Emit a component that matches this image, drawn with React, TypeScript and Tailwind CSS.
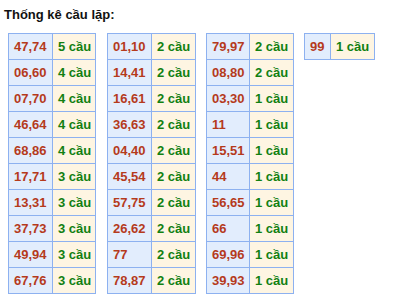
type Item = [string, number];

const tables: { items: Item[]; w1: string; w2: string; ml: string }[] = [
  {
    ml: 'ml-[8px]',
    w1: 'w-[44px]',
    w2: 'w-[43px]',
    items: [
      ['47,74', 5],
      ['06,60', 4],
      ['07,70', 4],
      ['46,64', 4],
      ['68,86', 4],
      ['17,71', 3],
      ['13,31', 3],
      ['37,73', 3],
      ['49,94', 3],
      ['67,76', 3],
    ],
  },
  {
    ml: 'ml-[11px]',
    w1: 'w-[44px]',
    w2: 'w-[44px]',
    items: [
      ['01,10', 2],
      ['14,41', 2],
      ['16,61', 2],
      ['36,63', 2],
      ['04,40', 2],
      ['45,54', 2],
      ['57,75', 2],
      ['26,62', 2],
      ['77', 2],
      ['78,87', 2],
    ],
  },
  {
    ml: 'ml-[10px]',
    w1: 'w-[43px]',
    w2: 'w-[44px]',
    items: [
      ['79,97', 2],
      ['08,80', 2],
      ['03,30', 1],
      ['11', 1],
      ['15,51', 1],
      ['44', 1],
      ['56,65', 1],
      ['66', 1],
      ['69,96', 1],
      ['39,93', 1],
    ],
  },
  {
    ml: 'ml-[10px]',
    w1: 'w-[26px]',
    w2: 'w-[44px]',
    items: [['99', 1]],
  },
];

export default function App() {
  return (
    <div className="w-[393px] h-[307px] bg-white font-['Liberation_Sans',Arial,sans-serif] overflow-hidden">
      <div className="pt-[7px] pl-[4px] text-[13px] leading-[15px] font-bold text-[#111]">
        Thống kê cầu lặp:
      </div>
      <div className="flex items-start mt-[11px]">
        {tables.map((t, i) => (
          <div key={i} className={`${t.ml} flex flex-col border-l border-t border-[#8db1f0]`}>
            {t.items.map(([pair, n]) => (
              <div key={pair} className="flex h-[26px] text-[13px] font-bold">
                <div
                  className={`${t.w1} flex items-center pl-[5px] bg-[#e2edfd] text-[#b53a1c] border-r border-b border-[#8db1f0]`}
                >
                  {pair}
                </div>
                <div
                  className={`${t.w2} flex items-center pl-[5px] bg-[#fef5e2] text-[#128012] border-r border-b border-[#8db1f0]`}
                >
                  {n} cầu
                </div>
              </div>
            ))}
          </div>
        ))}
      </div>
    </div>
  );
}
